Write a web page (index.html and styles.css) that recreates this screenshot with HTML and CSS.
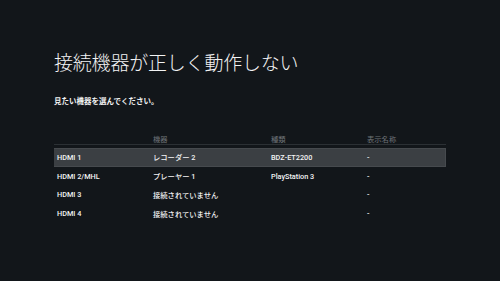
FILE: index.html
```html
<!DOCTYPE html>
<html lang="ja">
<head>
    <meta charset="UTF-8">
    <title>接続機器が正しく動作しない</title>
    <link rel="stylesheet" href="styles.css">
</head>
<body>
    <main class="page">
        <h1 class="title">接続機器が正しく動作しない</h1>
        <p class="lead">見たい機器を選んでください。</p>

        <div class="device-table">
            <div class="row head">
                <span></span>
                <span>機器</span>
                <span>種類</span>
                <span>表示名称</span>
            </div>
            <div class="row selected">
                <span>HDMI 1</span>
                <span>レコーダー 2</span>
                <span>BDZ-ET2200</span>
                <span>-</span>
            </div>
            <div class="row">
                <span>HDMI 2/MHL</span>
                <span>プレーヤー 1</span>
                <span>PlayStation 3</span>
                <span>-</span>
            </div>
            <div class="row">
                <span>HDMI 3</span>
                <span>接続されていません</span>
                <span></span>
                <span>-</span>
            </div>
            <div class="row">
                <span>HDMI 4</span>
                <span>接続されていません</span>
                <span></span>
                <span>-</span>
            </div>
        </div>
    </main>
</body>
</html>
```

FILE: styles.css
```css
:root {
    --background: #12161a;
    --text: #f2f3f4;
    --text-muted: #6e7378;
    --line: #2b3034;
    --selected: #3b3f43;
}

* {
    margin: 0;
    padding: 0;
    box-sizing: border-box;
}

body {
    background: var(--background);
    color: var(--text);
    font-family: Roboto, "Noto Sans CJK JP", sans-serif;
    width: 500px;
    height: 281px;
    overflow: hidden;
}

.page {
    padding: 51px 54px 0 54px;
}

.title {
    font-size: 19px;
    font-weight: 300;
    line-height: 26px;
    letter-spacing: -0.2px;
}

.lead {
    font-size: 7.5px;
    font-weight: 700;
    line-height: 10px;
    margin-top: 20px;
}

.device-table {
    margin-top: 27px;
    width: 392px;
    font-size: 7.3px;
    font-weight: 500;
}

.row {
    display: grid;
    grid-template-columns: 96px 118px 96px 1fr;
    align-items: center;
    height: 18.8px;
    padding-left: 3px;
}

.row.head {
    height: 11px;
    align-items: start;
    color: var(--text-muted);
    font-weight: 400;
    border-bottom: 1.5px solid var(--line);
    margin-bottom: 3px;
}

.row.selected {
    background: var(--selected);
    border: 1px solid #464a4e;
    border-left: none;
}
```
